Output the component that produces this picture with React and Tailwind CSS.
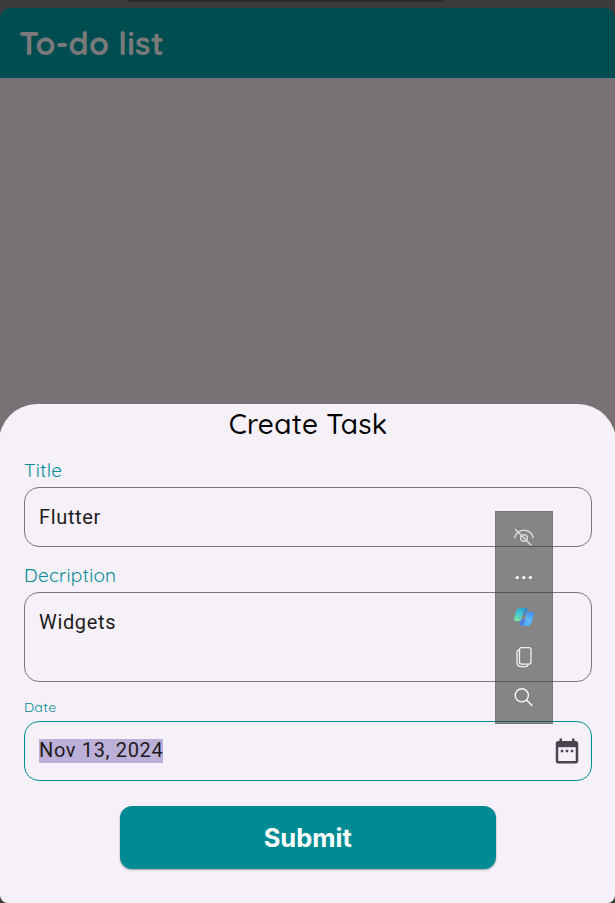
import React from "react";

const rounded = "font-['Quicksand','Lato',sans-serif] whitespace-nowrap";
const input = "font-['Roboto',sans-serif] text-[20px] leading-[24px] text-[#1d1b20]";

function Label({ children, className }) {
  return <div className={`${rounded} text-[#008b94] ${className}`}>{children}</div>;
}

function CalendarIcon() {
  return (
    <svg className="size-[30px] shrink-0" viewBox="0 0 24 24" fill="#49454f">
      <path d="M9 11H7v2h2v-2zm4 0h-2v2h2v-2zm4 0h-2v2h2v-2zm2-7h-1V2h-2v2H8V2H6v2H5c-1.11 0-1.99.9-1.99 2L3 20c0 1.1.89 2 2 2h14c1.1 0 2-.9 2-2V6c0-1.1-.9-2-2-2zm0 16H5V9h14v11z" />
    </svg>
  );
}

function EyeOffIcon() {
  return (
    <svg className="size-6" viewBox="0 0 24 24" fill="none" stroke="#d8d8d8" strokeWidth="1.5" strokeLinecap="round">
      <path d="M2.8 12.500C4 8.200 7.700 5.300 12 5.300s8 2.900 9.200 7.200" />
      <circle cx="12" cy="13" r="3.300" />
      <path d="M3.500 4.500 19 20" />
    </svg>
  );
}

function CopilotIcon() {
  return (
    <svg className="size-6" viewBox="0 0 24 24">
      <defs>
        <linearGradient id="left" x1="0.6" y1="0" x2="0.3" y2="1">
          <stop offset="0" stopColor="#29acd0" />
          <stop offset="0.5" stopColor="#49c9d2" />
          <stop offset="1" stopColor="#7be59a" />
        </linearGradient>
        <linearGradient id="right" x1="0.7" y1="0" x2="0.3" y2="1">
          <stop offset="0" stopColor="#418bec" />
          <stop offset="0.5" stopColor="#5bb7fa" />
          <stop offset="1" stopColor="#54aaff" />
        </linearGradient>
      </defs>
      <path d="M8.500 3H14c-1.300.4-2 1.600-2.500 3.300L9.400 14c-.5 1.600-1.100 2.200-2.500 2.200H4.200c-2 0-2.500-1.300-2-3.200l1.900-6.600C4.800 4.100 6.100 3 8.500 3Z" fill="url(#left)" />
      <path d="M13 3c1.600 0 2.200.8 2.700 2.300l.5 1.500h-1.400c-.8 0-1.300.5-1.600 1.500L12.500 11 11 11l1-5c.2-1.200.5-2.300 1-3Z" fill="#2f8bd0" />
      <path d="M15.500 6.800h4.300c2 0 2.500 1.400 2 3.200l-1.900 6.700c-.7 2.300-2 4.300-4.400 4.300h-5.400c1.300-.4 1.900-1.700 2.400-3.400L14.400 9c.3-1.300.5-1.900 1.100-2.200Z" fill="url(#right)" />
      <path d="M7.500 16.200c1.200-.1 1.800-.8 2.300-2.200h3.500l-1.200 4c-.4 1.500-.8 2.700-2 3-1.300 0-1.900-1-2.300-2.300Z" fill="#527fe0" />
    </svg>
  );
}

function CopyIcon() {
  return (
    <svg className="size-6" viewBox="0 0 24 24" fill="none" stroke="#f2f2f2" strokeWidth="1.3" strokeLinecap="round">
      <rect x="7.500" y="2.600" width="11.500" height="16.500" rx="2" />
      <path d="M7 4.800c-1.400.3-2 1.100-2 2.400V17c0 3 1.500 4.600 4.500 4.600h4c1.500 0 2.300-.6 2.600-2" />
    </svg>
  );
}

function SearchIcon() {
  return (
    <svg className="size-6" viewBox="0 0 24 24" fill="none" stroke="#fafafa" strokeWidth="1.4" strokeLinecap="round">
      <circle cx="9.800" cy="10.300" r="6.600" />
      <path d="m14.500 15 5.500 5.500" />
    </svg>
  );
}

function Toolbar() {
  return (
    <div className="absolute left-[495px] top-[511px] flex h-[213px] w-[58px] flex-col items-center gap-4 border border-[#555555]/25 bg-[#3a3d39]/60 pt-[13px]">
      <EyeOffIcon />
      <svg className="size-6" viewBox="0 0 24 24" fill="white">
        <circle cx="5.200" cy="12.500" r="1.600" />
        <circle cx="11.800" cy="12.500" r="1.600" />
        <circle cx="18.400" cy="12.500" r="1.600" />
      </svg>
      <CopilotIcon />
      <CopyIcon />
      <SearchIcon />
    </div>
  );
}

export default function App() {
  return (
    <div className="relative flex h-[903px] w-[615px] flex-col overflow-hidden bg-[#3b3b3b]">
      <div className="flex h-2 shrink-0 justify-center pr-[45px]">
        <div className="h-[2px] w-[316px] rounded-b-full bg-[#2b2b2b]" />
      </div>
      <header className="flex h-[70px] shrink-0 items-center rounded-t-[10px] bg-[#004d51] pl-[19px]">
        <h1 className={`${rounded} text-[32px] font-bold leading-[40px] tracking-[0.25px] text-[#7a7a7a]`}>To-do list</h1>
      </header>
      <main className="flex flex-1 flex-col overflow-hidden rounded-b-[8px] bg-[#787276] pt-[325.500px]">
        <section className="-mx-px flex flex-1 flex-col rounded-t-[38px] bg-[#f6f1f9] px-[25px]">
          <h2 className={`${rounded} mt-[2px] h-[36px] pl-px text-center text-[28px] font-medium leading-[36px] tracking-[0.25px] text-black`}>Create Task</h2>
          <Label className="mt-[15px] h-[30px] text-[19px] leading-[26px] tracking-[0.25px]">Title</Label>
          <div className={`${input} flex h-[60px] w-[568px] shrink-0 items-center rounded-[15px] border border-[#7a757f] pl-[14px] tracking-[0.65px]`}>Flutter</div>
          <Label className="mt-[15px] h-[30px] text-[19px] leading-[26px] tracking-[0.2px]">Decription</Label>
          <div className={`${input} h-[90px] w-[568px] shrink-0 rounded-[15px] border border-[#7a757f] pl-[14px] pt-[17px] tracking-[0.65px]`}>Widgets</div>
          <Label className="mt-[15px] h-[24px] text-[14px] leading-[20px] tracking-[0.3px]">Date</Label>
          <div className={`${input} flex h-[60px] w-[568px] shrink-0 items-center justify-between rounded-[15px] border border-[#008b94] pl-[14px] pr-[9px] tracking-[0.65px]`}>
            <span className="bg-[#bdb0d8] pb-px leading-[23px]">Nov 13, 2024</span>
            <CalendarIcon />
          </div>
          <button className="ml-[96px] mt-[25px] h-[63px] w-[375.500px] shrink-0 rounded-[12px] bg-[#008b94] pt-[2px] font-['Inter',sans-serif] text-[25.500px] font-bold text-white shadow-[0_1px_2px_rgba(0,0,0,0.35)]">Submit</button>
        </section>
      </main>
      <Toolbar />
    </div>
  );
}
